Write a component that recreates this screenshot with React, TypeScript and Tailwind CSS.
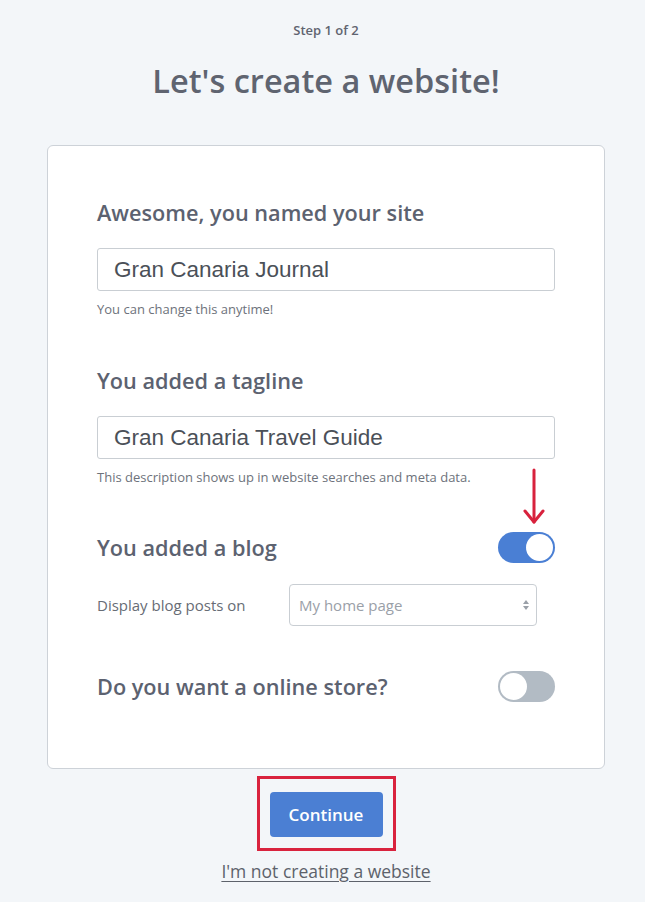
import React from 'react';

const Toggle = ({ on }: { on: boolean }) => (
  <div
    className={`flex h-[31px] w-[57px] items-center rounded-full px-[2px] ${
      on ? 'justify-end bg-[#4a7fd4]' : 'justify-start bg-[#b2bbc4]'
    }`}
  >
    <div className="h-[27px] w-[27px] rounded-full bg-white" />
  </div>
);

const App = () => {
  return (
    <div className="min-h-[902px] bg-[#f3f6f9] font-['Open_Sans',sans-serif] text-[#5d626c]">
      <div className="flex flex-col items-center pt-[21px] pl-[7px]">
        <p className="text-[13px] leading-[18px] font-semibold text-[#5f6470]">Step 1 of 2</p>
        <h1 className="mt-[20px] text-[32.5px] leading-[44px] font-semibold text-[#5f6470]">
          Let's create a website!
        </h1>

        <div className="mt-[42px] w-[558px] rounded-[6px] border border-[#cdd2d8] bg-white px-[49px] pt-[54px] pb-[66px]">
          <h2 className="text-[21.7px] leading-[26px] font-semibold text-[#5c6270]">Awesome, you named your site</h2>
          <div className="mt-[22px] flex h-[43px] items-center rounded-[3px] border border-[#c9ced3] px-[16px] font-['Liberation_Sans',Arial,sans-serif] text-[22.5px] text-[#4b5058]">
            Gran Canaria Journal
          </div>
          <p className="mt-[10px] text-[13px] leading-[16px] text-[#6d727b]">You can change this anytime!</p>

          <h2 className="mt-[51px] text-[21.7px] leading-[26px] font-semibold text-[#5c6270]">You added a tagline</h2>
          <div className="mt-[22px] flex h-[43px] items-center rounded-[3px] border border-[#c9ced3] px-[16px] font-['Liberation_Sans',Arial,sans-serif] text-[22.5px] text-[#4b5058]">
            Gran Canaria Travel Guide
          </div>
          <p className="mt-[10px] text-[13px] leading-[16px] text-[#6d727b]">
            This description shows up in website searches and meta data.
          </p>

          <div className="relative mt-[47px] flex items-center justify-between">
            <h2 className="text-[21.7px] leading-[26px] font-semibold text-[#5c6270]">You added a blog</h2>
            <Toggle on />
            <svg
              className="absolute right-[10px] top-[-64px]"
              width="22"
              height="58"
              viewBox="0 0 22 58"
              fill="none"
              stroke="#d8223d"
              strokeWidth="3"
              strokeLinecap="round"
              strokeLinejoin="round"
            >
              <path d="M11 2 V54" />
              <path d="M2 43 L11 54 L20 43" />
            </svg>
          </div>

          <div className="mt-[21px] flex items-center">
            <span className="w-[192px] text-[15px] text-[#676c75]">Display blog posts on</span>
            <div className="flex h-[42px] w-[248px] items-center justify-between rounded-[4px] border border-[#c9ced3] pl-[9px] pr-[6px]">
              <span className="text-[15px] text-[#9aa0a8]">My home page</span>
              <svg width="8" height="12" viewBox="0 0 8 12" fill="#9aa0a8">
                <path d="M4 1 L7 5 H1 Z" />
                <path d="M4 11 L7 7 H1 Z" />
              </svg>
            </div>
          </div>

          <div className="mt-[45px] flex items-center justify-between">
            <h2 className="text-[21.7px] leading-[26px] font-semibold text-[#5c6270]">Do you want a online store?</h2>
            <Toggle on={false} />
          </div>
        </div>

        <div className="mt-[7px] border-[3px] border-[#d9233e] px-[10px] pt-[13px] pb-[11px]">
          <button className="h-[45px] w-[113px] rounded-[4px] bg-[#4b7fd3] text-[17px] font-semibold text-white">
            Continue
          </button>
        </div>

        <a href="#" className="mt-[9px] text-[17.5px] leading-[22px] text-[#5d626b] underline underline-offset-[3px]">
          I'm not creating a website
        </a>
      </div>
    </div>
  );
};

export default App;
